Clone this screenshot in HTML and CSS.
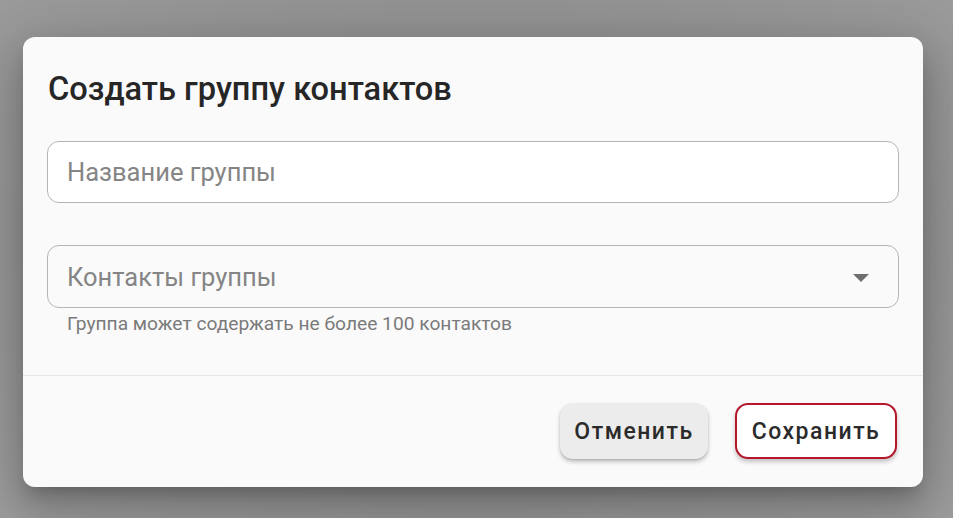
FILE: index.html
```html
<!DOCTYPE html>
<html lang="ru">
  <head>
    <meta charset="UTF-8" />
    <meta name="viewport" content="width=device-width, initial-scale=1.0" />
    <title>Создать группу контактов</title>
    <link rel="stylesheet" href="styles.css">
  </head>
  <body>
    <div class="backdrop">
      <div class="dialog">
        <h2 class="dialog-title">Создать группу контактов</h2>
        <div class="dialog-body">
          <div class="field">
            <input class="field-input" type="text" placeholder="Название группы" />
          </div>
          <div class="field">
            <div class="field-select">
              <span class="field-placeholder">Контакты группы</span>
              <svg class="field-arrow" width="16" height="8" viewBox="0 0 16 8">
                <path d="M0 0h16l-8 8z" fill="#6f6f6f" />
              </svg>
            </div>
            <div class="field-hint">Группа может содержать не более 100 контактов</div>
          </div>
        </div>
        <div class="dialog-actions">
          <button class="btn btn-cancel">Отменить</button>
          <button class="btn btn-save">Сохранить</button>
        </div>
      </div>
    </div>
  </body>
</html>
```

FILE: styles.css
```css
* {
  margin: 0;
  padding: 0;
  box-sizing: border-box;
}
html,
body {
  height: 100%;
}
body {
  font-family: Roboto, "Noto Sans", sans-serif;
  background: #9a9a9a;
  overflow: hidden;
}
.backdrop {
  height: 100%;
  padding: 37px 30px 0 23px;
  background: radial-gradient(ellipse at 50% 45%, #8a8a8a 0%, #929292 60%, #9c9c9c 100%);
}
.dialog {
  width: 900px;
  height: 450px;
  background: #fafafa;
  border-radius: 12px;
  box-shadow: 0 11px 15px -7px rgba(0, 0, 0, 0.2), 0 24px 38px 3px rgba(0, 0, 0, 0.14),
    0 9px 46px 8px rgba(0, 0, 0, 0.12);
  display: flex;
  flex-direction: column;
}
.dialog-title {
  font-size: 32.6px;
  font-weight: 500;
  color: #262626;
  padding: 32px 25px 0 25px;
  line-height: 40px;
}
.dialog-body {
  padding: 32px 24px 0 24px;
  display: flex;
  flex-direction: column;
  gap: 42px;
  border-bottom: 1px solid #e6e6e6;
  height: 267px;
}
.field-input,
.field-select {
  width: 100%;
  height: 63px;
  border: 1px solid #b5b5b5;
  border-radius: 12px;
  padding: 0 19px;
  font-family: Roboto, "Noto Sans", sans-serif;
  font-size: 25.5px;
  color: #222;
  outline: none;
}
.field-input {
  height: 62px;
  background: #fff;
}
.field-input::placeholder {
  color: #858585;
}
.field-select {
  display: flex;
  align-items: center;
  justify-content: space-between;
  background: #fafafa;
  padding-right: 29px;
}
.field-placeholder {
  color: #858585;
}
.field-arrow {
  margin-top: 2px;
}
.field-hint {
  font-size: 19.2px;
  line-height: 24px;
  color: #7a7a7a;
  padding: 4px 0 0 20px;
}
.dialog-actions {
  display: flex;
  justify-content: flex-end;
  align-items: center;
  gap: 27px;
  padding: 27px 26px 0 0;
}
.btn {
  height: 56px;
  border-radius: 13px;
  font-family: Roboto, "Noto Sans", sans-serif;
  font-size: 23px;
  font-weight: 500;
  letter-spacing: 1.5px;
  color: #2b2b2b;
  cursor: pointer;
}
.btn-cancel {
  width: 148px;
  border: none;
  background: #ececec;
  box-shadow: 0 3px 4px rgba(0, 0, 0, 0.22), 0 1px 2px rgba(0, 0, 0, 0.12);
}
.btn-save {
  width: 162px;
  border: 2px solid #b5162a;
  background: #fff;
  box-shadow: 0 3px 4px rgba(0, 0, 0, 0.22);
}
```
